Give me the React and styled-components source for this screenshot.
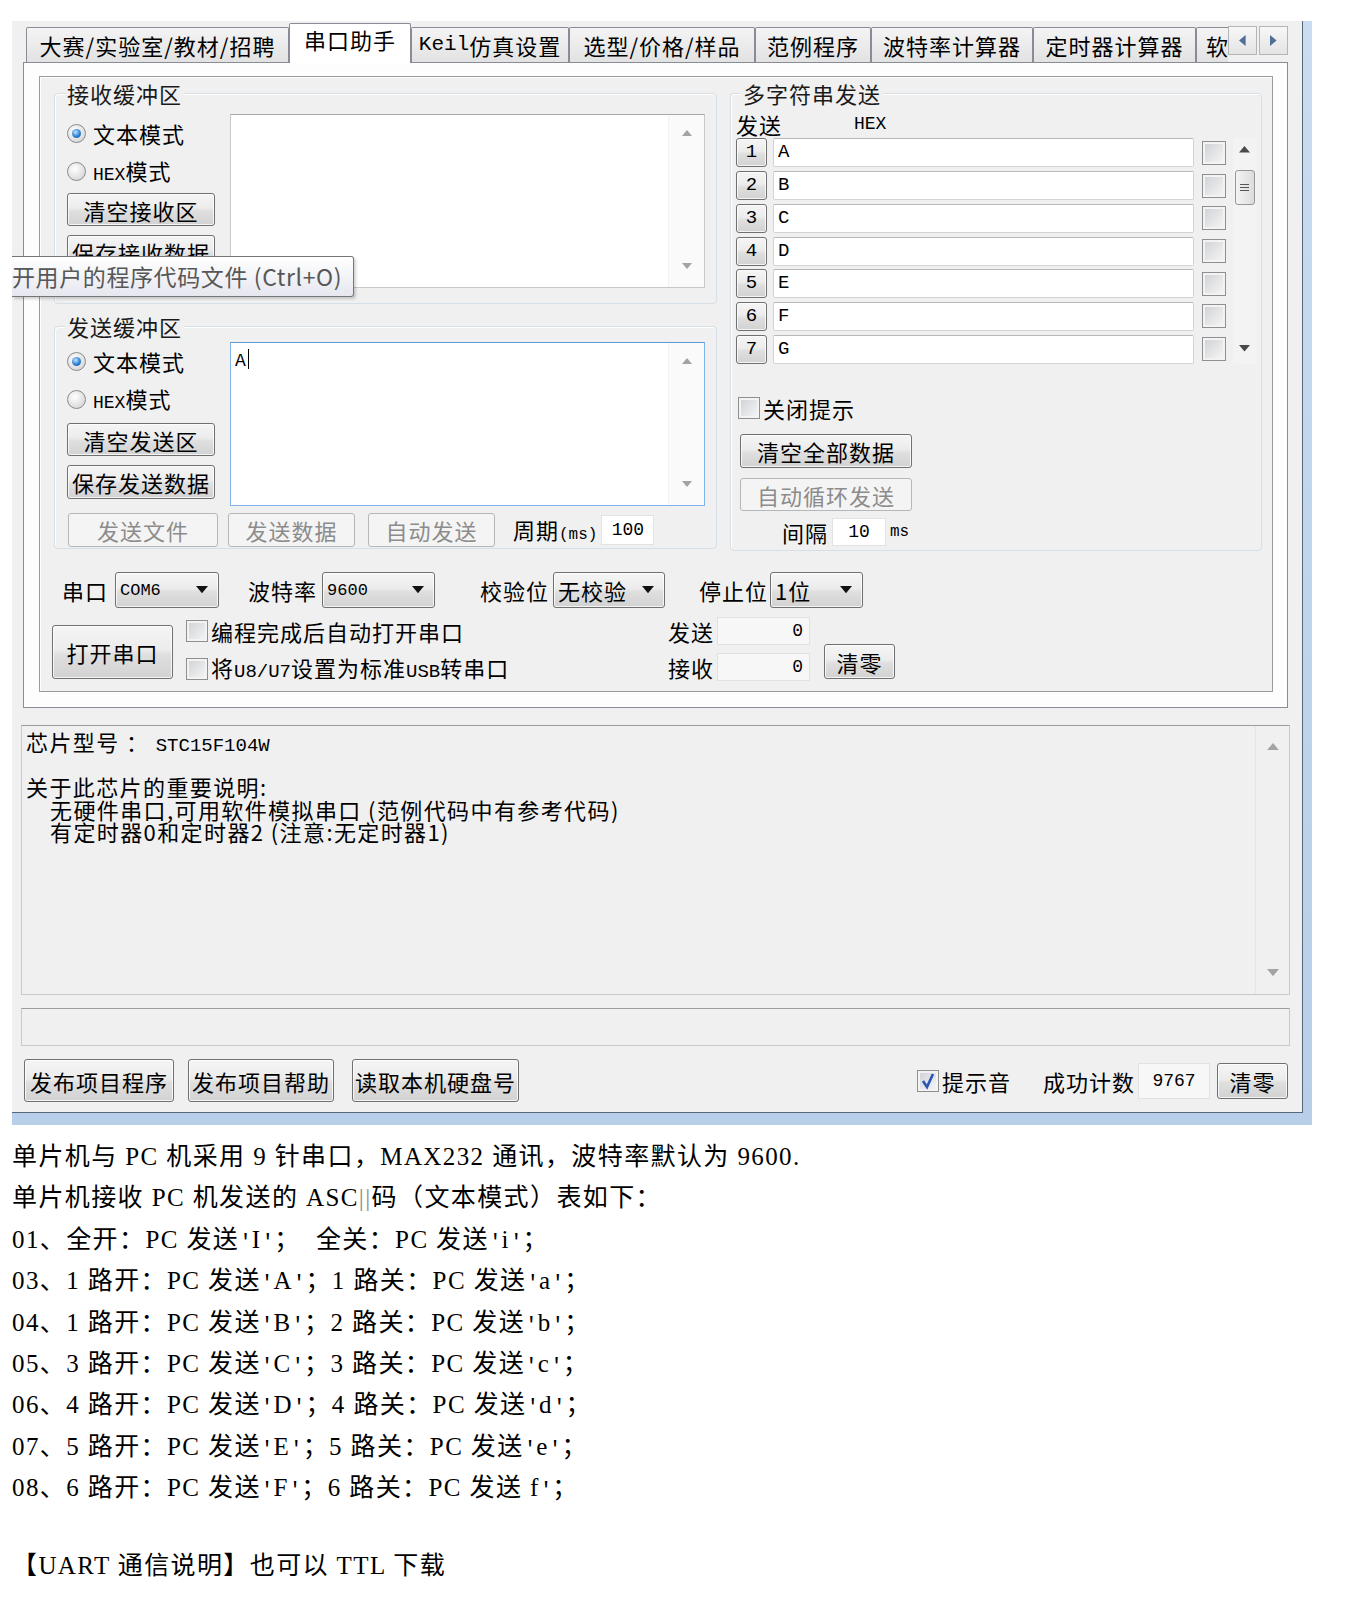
import React from "react";

// npm imports
import styled, { createGlobalStyle, css } from "styled-components";

const UI_FONT = `"Noto Sans CJK SC", "Liberation Sans", sans-serif`;
const MONO_FONT = `"Liberation Mono", "Noto Sans CJK SC", monospace`;
const DOC_FONT = `"Liberation Serif", "Noto Sans CJK SC", serif`;

const GlobalStyle = createGlobalStyle`
  * { box-sizing: border-box; }
  html, body { margin: 0; padding: 0; background: #fff; }
  body { font-family: ${UI_FONT}; color: #000; }
`;

// shared looks
const raised = css`
  border: 1px solid #707070;
  border-radius: 3px;
  background: linear-gradient(#f5f5f5 0%, #ececec 45%, #dfdfdf 55%, #d2d2d2 100%);
  box-shadow: inset 0 0 0 1px rgba(255, 255, 255, 0.75);
`;

const sunken = css`
  border: 1px solid #c9c9c9;
  border-top-color: #9c9c9c;
`;

// styled-components
const Page = styled.div`
  width: 1352px;
  padding: 21px 0 40px 12px;
`;

const WindowFrame = styled.div`
  width: 1300px;
  padding: 0 9px 12px 0;
  background: linear-gradient(180deg, #c9dcf0 0%, #b7cfe9 100%);
`;

const Window = styled.div`
  position: relative;
  display: flex;
  flex-direction: column;
  padding-bottom: 10px;
  background: #f0f0f0;
  border-right: 1px solid #56677a;
  border-bottom: 1px solid #56677a;
  font-size: 22px;
  line-height: 1;
  letter-spacing: 1px;
`;

const TabStrip = styled.div`
  position: relative;
  z-index: 1;
  display: flex;
  align-items: flex-end;
  height: 41px;
  padding: 0 14px;
`;

const Tabs = styled.div`
  flex: 1;
  display: flex;
  align-items: flex-end;
  height: 42px;
  margin-bottom: -1px;
  overflow: hidden;
`;

const Tab = styled.div`
  flex-shrink: 0;
  width: ${(p) => p.$w}px;
  height: ${(p) => (p.$active ? 40 : 35)}px;
  margin-bottom: ${(p) => (p.$active ? 0 : 1)}px;
  padding: ${(p) => (p.$active ? "4px 0 0" : "6px 0 0")};
  padding-left: ${(p) => (p.$lead ? 9 : 0)}px;
  display: flex;
  justify-content: ${(p) => (p.$lead ? "flex-start" : "center")};
  white-space: nowrap;
  overflow: hidden;
  border: 1px solid #898c95;
  border-bottom: none;
  border-radius: 2px 2px 0 0;
  background: ${(p) => (p.$active ? "#fff" : "linear-gradient(#f4f4f4, #e2e2e2)")};
`;

const TabArrows = styled.div`
  align-self: flex-start;
  display: flex;
  gap: 2px;
  margin-top: 5px;
`;

const ArrowButton = styled.div`
  width: 29px;
  height: 29px;
  display: flex;
  align-items: center;
  justify-content: center;
  border: 1px solid #b5b5b5;
  background: linear-gradient(#f7f7f7, #e4e4e4);
`;

const TabPanel = styled.div`
  position: relative;
  height: 646px;
  margin: 0 14px 0 11px;
  padding: 13px 14px 0 15px;
  border: 1px solid #898c95;
  background: #fdfdfd;
`;

const MainFrame = styled.div`
  height: 616px;
  padding: 16px 10px 0 12px;
  border: 1px solid #9a9a9a;
  box-shadow: inset 1px 1px 0 #fff, 1px 1px 0 #fff;
  background: #f0f0f0;
`;

const TopArea = styled.div`
  display: flex;
  gap: 13px;
  margin-left: 2px;
`;

const LeftCol = styled.div`
  width: 663px;
  display: flex;
  flex-direction: column;
  gap: 22px;
`;

const Group = styled.div`
  position: relative;
  width: ${(p) => p.$w || 663}px;
  height: ${(p) => p.$h}px;
  padding: ${(p) => p.$pad};
  border: 1px solid #d5dfe5;
  border-radius: 4px;
  box-shadow: inset 1px 1px 0 #fff;
`;

const Legend = styled.span`
  position: absolute;
  top: -15px;
  left: 10px;
  padding: 0 2px;
  height: 28px;
  line-height: 28px;
  background: #f0f0f0;
  color: #1a1a1a;
`;

const BufferRow = styled.div`
  display: flex;
  gap: 12px;
  height: ${(p) => p.$h}px;
`;

const ModeCol = styled.div`
  width: 152px;
  display: flex;
  flex-direction: column;
`;

const RadioRow = styled.div`
  height: 38px;
  display: flex;
  align-items: center;
  gap: 7px;
  padding-left: 1px;
`;

const Radio = styled.span`
  flex-shrink: 0;
  width: 19px;
  height: 19px;
  border-radius: 50%;
  border: 1px solid #8a8a8a;
  background: radial-gradient(circle at 40% 35%, #ffffff, #dcdcdc 70%, #c6c6c6);
  display: flex;
  align-items: center;
  justify-content: center;
  &::after {
    content: "";
    display: ${(p) => (p.$on ? "block" : "none")};
    width: 9px;
    height: 9px;
    border-radius: 50%;
    background: radial-gradient(circle at 40% 35%, #bfe4ff, #2c80d2 55%, #0c4c8e);
  }
`;

const Lat = styled.span`
  font-family: ${MONO_FONT};
  font-size: ${(p) => p.$s || 18}px;
  letter-spacing: 0;
`;

const Button = styled.div`
  ${raised}
  flex-shrink: 0;
  width: ${(p) => p.$w}px;
  height: ${(p) => p.$h || 34}px;
  margin-top: ${(p) => p.$mt || 0}px;
  margin-left: ${(p) => p.$ml || 0}px;
  display: flex;
  align-items: center;
  justify-content: center;
  white-space: nowrap;
  color: #000;
  ${(p) =>
    p.$off &&
    css`
      border-color: #b3b7ba;
      background: #f4f4f4;
      box-shadow: none;
      color: #8c8c8c;
    `}
`;

const TextBox = styled.div`
  width: 475px;
  display: flex;
  border: 1px solid ${(p) => (p.$focus ? "#7eb4ea" : "#c8c8c8")};
  border-top-color: ${(p) => (p.$focus ? "#5c99d6" : "#a9a9a9")};
  background: #fff;
`;

const TextArea = styled.div`
  flex: 1;
  padding: 6px 4px;
  font-family: ${MONO_FONT};
  font-size: 18px;
  line-height: 22px;
`;

const Caret = styled.span`
  display: inline-block;
  width: 1px;
  height: 20px;
  margin-left: 1px;
  vertical-align: -3px;
  background: #000;
`;

const ScrollGutter = styled.div`
  width: ${(p) => p.$w || 36}px;
  display: flex;
  flex-direction: column;
  align-items: center;
  justify-content: space-between;
  padding: ${(p) => p.$pad || "15px 0 18px"};
  background: ${(p) => p.$bg || "#fafafa"};
  border-left: 1px solid ${(p) => p.$line || "#f2f2f2"};
`;

const TriSvg = styled.svg`
  display: block;
  flex-shrink: 0;
`;

const SendFooter = styled.div`
  display: flex;
  align-items: center;
  height: 34px;
  margin: 7px 0 0 2px;
`;

const FieldLabel = styled.span`
  margin-left: ${(p) => p.$ml || 0}px;
  white-space: nowrap;
`;

const SmallInput = styled.div`
  width: ${(p) => p.$w}px;
  height: ${(p) => p.$h || 30}px;
  margin-left: ${(p) => p.$ml || 0}px;
  display: flex;
  align-items: center;
  justify-content: ${(p) => (p.$right ? "flex-end" : "center")};
  padding: 0 6px;
  border: 1px solid #e2e2e2;
  background: ${(p) => p.$bg || "#fff"};
`;

const MultiHeader = styled.div`
  height: 29px;
  display: flex;
  align-items: center;
`;

const HexLabel = styled(Lat)`
  margin-left: 72px;
`;

const RowsArea = styled.div`
  display: flex;
  height: 226px;
`;

const RowsList = styled.div`
  display: flex;
  flex-direction: column;
  gap: 2.7px;
`;

const StringRow = styled.div`
  height: 30px;
  display: flex;
  align-items: center;
`;

const NumButton = styled.div`
  ${raised}
  width: 31px;
  height: 29px;
  display: flex;
  align-items: center;
  justify-content: center;
  font-family: ${MONO_FONT};
  font-size: 19px;
  letter-spacing: 0;
`;

const RowEdit = styled.div`
  width: 421px;
  height: 29px;
  margin: 0 8px 0 6px;
  padding-left: 4px;
  display: flex;
  align-items: center;
  border: 1px solid #d4d4d4;
  border-top-color: #b8b8b8;
  border-radius: 2px;
  background: #fff;
  font-family: ${MONO_FONT};
  font-size: 19px;
`;

const CheckBox = styled.span`
  flex-shrink: 0;
  width: ${(p) => p.$s || 22}px;
  height: ${(p) => p.$s || 22}px;
  display: flex;
  align-items: center;
  justify-content: center;
  border: 1px solid #8f8f8f;
  background: linear-gradient(135deg, #cdd0d4, #f7f7f7);
  box-shadow: inset 0 0 0 2px #f3f3f3;
`;

const ListScroll = styled.div`
  width: 23px;
  margin-left: 7px;
  display: flex;
  flex-direction: column;
  align-items: center;
  padding: 8px 0 12px;
  background: #f3f3f3;
`;

const Thumb = styled.div`
  width: 20px;
  height: 35px;
  margin-top: 17px;
  display: flex;
  flex-direction: column;
  align-items: center;
  justify-content: center;
  gap: 2px;
  border: 1px solid #979797;
  border-radius: 3px;
  background: linear-gradient(90deg, #f4f4f4, #dcdcdc);
  span {
    width: 9px;
    height: 1px;
    background: #555;
  }
`;

const DownSlot = styled.div`
  margin-top: auto;
`;

const CheckRow = styled.div`
  height: ${(p) => p.$h || 24}px;
  margin: ${(p) => p.$m || 0};
  display: flex;
  align-items: center;
  gap: 3px;
  white-space: nowrap;
`;

const IntervalRow = styled.div`
  height: 28px;
  margin: 7px 0 0 46px;
  display: flex;
  align-items: center;
  gap: 4px;
`;

const SettingsRow = styled.div`
  height: 36px;
  margin-top: 21px;
  display: flex;
  align-items: center;
`;

const Combo = styled.div`
  ${raised}
  width: ${(p) => p.$w}px;
  height: 36px;
  margin-left: ${(p) => p.$gap}px;
  display: flex;
  align-items: center;
  justify-content: space-between;
  padding: 0 10px 0 4px;
  white-space: nowrap;
`;

const OpenRow = styled.div`
  height: 66px;
  margin-top: 9px;
  display: flex;
  align-items: flex-start;
`;

const ChecksCol = styled.div`
  width: 482px;
  margin-left: 13px;
  display: flex;
  flex-direction: column;
  gap: 10px;
`;

const CountersCol = styled.div`
  display: flex;
  flex-direction: column;
  gap: 8px;
`;

const CounterRow = styled.div`
  height: 28px;
  display: flex;
  align-items: center;
`;

const InfoPanel = styled.div`
  ${sunken}
  height: 270px;
  margin: 17px 12px 0 9px;
  display: flex;
  background: #f0f0f0;
`;

const InfoText = styled.div`
  flex: 1;
  padding: 4px 0 0 4px;
  font-size: 22px;
  line-height: 22.5px;
  letter-spacing: 1.4px;
  white-space: pre;
`;

const InfoLine = styled.div`
  height: 22.5px;
  padding-left: ${(p) => (p.$indent ? 24 : 0)}px;
`;

const StatusBar = styled.div`
  ${sunken}
  height: 38px;
  margin: 13px 12px 0 9px;
  background: #f0f0f0;
`;

const BottomBar = styled.div`
  height: 43px;
  margin-top: 13px;
  padding: 0 14px 0 12px;
  display: flex;
  align-items: center;
`;

const BottomRight = styled.div`
  margin-left: auto;
  display: flex;
  align-items: center;
`;

const Tooltip = styled.div`
  position: absolute;
  left: 0;
  top: 235px;
  z-index: 5;
  width: 342px;
  height: 41px;
  display: flex;
  align-items: center;
  border: 1px solid #767676;
  border-left: none;
  border-radius: 0 3px 3px 0;
  background: linear-gradient(#ffffff, #e6e7ef);
  box-shadow: 2px 2px 3px rgba(0, 0, 0, 0.18);
  color: #575757;
  font-size: 23px;
  letter-spacing: 0.6px;
  white-space: nowrap;
`;

const Doc = styled.div`
  margin-top: 11px;
  font-family: ${DOC_FONT};
  font-size: 25px;
  line-height: 41.4px;
  letter-spacing: 1.4px;
  white-space: pre;
`;

const DocLine = styled.div`
  height: 41.4px;
`;

const DocGap = styled.div`
  height: 36.6px;
`;

// the source document draws its apostrophes half-width, like a CJK font does
const Quote = styled.span`
  font-family: ${MONO_FONT};
  font-size: 21px;
  line-height: 0;
  letter-spacing: 0;
`;

const Bars = styled.span`
  color: #8a8a8a;
  font-weight: 300;
`;

// drawings
const Tri = ({ dir, color = "#a3a3a3", size = 10 }) => {
  const paths = {
    up: "M0 6 L10 6 L5 0 Z",
    down: "M0 0 L10 0 L5 6 Z",
    left: "M6 0 L6 10 L0 5 Z",
    right: "M0 0 L0 10 L6 5 Z",
  };
  const flat = dir === "up" || dir === "down";
  return (
    <TriSvg
      width={flat ? size : size * 0.6}
      height={flat ? size * 0.6 : size}
      viewBox={flat ? "0 0 10 6" : "0 0 6 10"}
    >
      <path d={paths[dir]} fill={color} />
    </TriSvg>
  );
};

const Tick = () => (
  <TriSvg width="16" height="18" viewBox="0 0 16 18">
    <path d="M3 9 L7 15 L13 2" fill="none" stroke="#2a56b8" strokeWidth="2.6" />
  </TriSvg>
);

const TABS = [
  { w: 263, label: "大赛/实验室/教材/招聘" },
  { w: 122, label: "串口助手", active: true },
  { w: 158, label: <><Lat $s={21}>Keil</Lat>仿真设置</> },
  { w: 186, label: "选型/价格/样品" },
  { w: 116, label: "范例程序" },
  { w: 162, label: "波特率计算器" },
  { w: 163, label: "定时器计算器" },
  { w: 70, label: "软", lead: true },
];

const STRINGS = ["A", "B", "C", "D", "E", "F", "G"];

const DOC_LINES = [
  "01、全开：PC 发送'I'；  全关：PC 发送'i'；",
  "03、1 路开：PC 发送'A'；1 路关：PC 发送'a'；",
  "04、1 路开：PC 发送'B'；2 路关：PC 发送'b'；",
  "05、3 路开：PC 发送'C'；3 路关：PC 发送'c'；",
  "06、4 路开：PC 发送'D'；4 路关：PC 发送'd'；",
  "07、5 路开：PC 发送'E'；5 路关：PC 发送'e'；",
  "08、6 路开：PC 发送'F'；6 路关：PC 发送 f'；",
];

const withQuotes = (line) =>
  line.split("'").map((part, i) => (
    <React.Fragment key={i}>
      {i > 0 && <Quote>'</Quote>}
      {part}
    </React.Fragment>
  ));

// component
const App = () => {
  return (
    <>
      <GlobalStyle />
      <Page>
        <WindowFrame>
          <Window>
            <TabStrip>
              <Tabs>
                {TABS.map((t, i) => (
                  <Tab key={i} $w={t.w} $active={t.active} $lead={t.lead}>
                    {t.label}
                  </Tab>
                ))}
              </Tabs>
              <TabArrows>
                <ArrowButton>
                  <Tri dir="left" color="#4f6f98" size={11} />
                </ArrowButton>
                <ArrowButton>
                  <Tri dir="right" color="#4f6f98" size={11} />
                </ArrowButton>
              </TabArrows>
            </TabStrip>

            <TabPanel>
              <MainFrame>
                <TopArea>
                  <LeftCol>
                    <Group $h={211} $pad="20px 11px 0 11px">
                      <Legend>接收缓冲区</Legend>
                      <BufferRow $h={174}>
                        <ModeCol>
                          <RadioRow>
                            <Radio $on />
                            文本模式
                          </RadioRow>
                          <RadioRow>
                            <Radio />
                            <span>
                              <Lat $s={18}>HEX</Lat>模式
                            </span>
                          </RadioRow>
                          <Button $w={148} $h={33} $mt={3} $ml={1}>
                            清空接收区
                          </Button>
                          <Button $w={148} $h={33} $mt={9} $ml={1}>
                            保存接收数据
                          </Button>
                        </ModeCol>
                        <TextBox>
                          <TextArea />
                          <ScrollGutter>
                            <Tri dir="up" />
                            <Tri dir="down" />
                          </ScrollGutter>
                        </TextBox>
                      </BufferRow>
                    </Group>

                    <Group $h={223} $pad="15px 11px 0 11px">
                      <Legend>发送缓冲区</Legend>
                      <BufferRow $h={164}>
                        <ModeCol>
                          <RadioRow>
                            <Radio $on />
                            文本模式
                          </RadioRow>
                          <RadioRow>
                            <Radio />
                            <span>
                              <Lat $s={18}>HEX</Lat>模式
                            </span>
                          </RadioRow>
                          <Button $w={148} $h={33} $mt={5} $ml={1}>
                            清空发送区
                          </Button>
                          <Button $w={148} $h={34} $mt={9} $ml={1}>
                            保存发送数据
                          </Button>
                        </ModeCol>
                        <TextBox $focus>
                          <TextArea>
                            A<Caret />
                          </TextArea>
                          <ScrollGutter>
                            <Tri dir="up" />
                            <Tri dir="down" />
                          </ScrollGutter>
                        </TextBox>
                      </BufferRow>
                      <SendFooter>
                        <Button $w={150} $off>
                          发送文件
                        </Button>
                        <Button $w={127} $ml={10} $off>
                          发送数据
                        </Button>
                        <Button $w={127} $ml={13} $off>
                          自动发送
                        </Button>
                        <FieldLabel $ml={18}>
                          周期<Lat $s={16}>(ms)</Lat>
                        </FieldLabel>
                        <SmallInput $w={53} $ml={4}>
                          <Lat>100</Lat>
                        </SmallInput>
                      </SendFooter>
                    </Group>
                  </LeftCol>

                  <Group $w={532} $h={458} $pad="15px 5px 0 5px">
                    <Legend>多字符串发送</Legend>
                    <MultiHeader>
                      发送
                      <HexLabel>HEX</HexLabel>
                    </MultiHeader>
                    <RowsArea>
                      <RowsList>
                        {STRINGS.map((s, i) => (
                          <StringRow key={s}>
                            <NumButton>{i + 1}</NumButton>
                            <RowEdit>{s}</RowEdit>
                            <CheckBox $s={24} />
                          </StringRow>
                        ))}
                      </RowsList>
                      <ListScroll>
                        <Tri dir="up" color="#4a4a4a" size={11} />
                        <Thumb>
                          <span />
                          <span />
                          <span />
                        </Thumb>
                        <DownSlot>
                          <Tri dir="down" color="#4a4a4a" size={11} />
                        </DownSlot>
                      </ListScroll>
                    </RowsArea>
                    <CheckRow $m="32px 0 0 2px">
                      <CheckBox />
                      关闭提示
                    </CheckRow>
                    <Button $w={172} $h={34} $mt={14} $ml={4}>
                      清空全部数据
                    </Button>
                    <Button $w={172} $h={33} $mt={10} $ml={4} $off>
                      自动循环发送
                    </Button>
                    <IntervalRow>
                      间隔
                      <SmallInput $w={54} $h={28}>
                        <Lat>10</Lat>
                      </SmallInput>
                      <Lat $s={16}>ms</Lat>
                    </IntervalRow>
                  </Group>
                </TopArea>

                <SettingsRow>
                  <FieldLabel $ml={10}>串口</FieldLabel>
                  <Combo $w={104} $gap={7}>
                    <Lat $s={17}>COM6</Lat>
                    <Tri dir="down" color="#111" size={12} />
                  </Combo>
                  <FieldLabel $ml={29}>波特率</FieldLabel>
                  <Combo $w={113} $gap={5}>
                    <Lat $s={17}>9600</Lat>
                    <Tri dir="down" color="#111" size={12} />
                  </Combo>
                  <FieldLabel $ml={45}>校验位</FieldLabel>
                  <Combo $w={112} $gap={4}>
                    无校验
                    <Tri dir="down" color="#111" size={12} />
                  </Combo>
                  <FieldLabel $ml={34}>停止位</FieldLabel>
                  <Combo $w={93} $gap={2}>
                    1位
                    <Tri dir="down" color="#111" size={12} />
                  </Combo>
                </SettingsRow>

                <OpenRow>
                  <Button $w={121} $h={54} $mt={8}>
                    打开串口
                  </Button>
                  <ChecksCol>
                    <CheckRow $h={28}>
                      <CheckBox />
                      编程完成后自动打开串口
                    </CheckRow>
                    <CheckRow $h={28}>
                      <CheckBox />
                      <span>
                        将<Lat $s={19}>U8/U7</Lat>设置为标准<Lat $s={19}>USB</Lat>转串口
                      </span>
                    </CheckRow>
                  </ChecksCol>
                  <CountersCol>
                    <CounterRow>
                      发送
                      <SmallInput $w={93} $h={28} $ml={3} $right $bg="#f7f7f7">
                        <Lat>0</Lat>
                      </SmallInput>
                    </CounterRow>
                    <CounterRow>
                      接收
                      <SmallInput $w={93} $h={28} $ml={3} $right $bg="#f7f7f7">
                        <Lat>0</Lat>
                      </SmallInput>
                    </CounterRow>
                  </CountersCol>
                  <Button $w={71} $h={35} $mt={27} $ml={14}>
                    清零
                  </Button>
                </OpenRow>
              </MainFrame>
            </TabPanel>

            <InfoPanel>
              <InfoText>
                <InfoLine>
                  芯片型号 ： <Lat $s={19}>STC15F104W</Lat>
                </InfoLine>
                <InfoLine />
                <InfoLine>关于此芯片的重要说明:</InfoLine>
                <InfoLine $indent>无硬件串口,可用软件模拟串口 (范例代码中有参考代码)</InfoLine>
                <InfoLine $indent>有定时器0和定时器2 (注意:无定时器1)</InfoLine>
              </InfoText>
              <ScrollGutter $w={34} $pad="17px 0 18px" $bg="#f0f0f0" $line="#e4e4e4">
                <Tri dir="up" size={12} />
                <Tri dir="down" size={12} />
              </ScrollGutter>
            </InfoPanel>

            <StatusBar />

            <BottomBar>
              <Button $w={150} $h={43}>
                发布项目程序
              </Button>
              <Button $w={146} $h={43} $ml={14}>
                发布项目帮助
              </Button>
              <Button $w={167} $h={43} $ml={18}>
                读取本机硬盘号
              </Button>
              <BottomRight>
                <CheckBox>
                  <Tick />
                </CheckBox>
                <FieldLabel $ml={3}>提示音</FieldLabel>
                <FieldLabel $ml={32}>成功计数</FieldLabel>
                <SmallInput $w={72} $h={36} $ml={3} $bg="#f7f7f7">
                  <Lat>9767</Lat>
                </SmallInput>
                <Button $w={71} $h={36} $ml={7}>
                  清零
                </Button>
              </BottomRight>
            </BottomBar>

            <Tooltip>开用户的程序代码文件 (Ctrl+O)</Tooltip>
          </Window>
        </WindowFrame>

        <Doc>
          <DocLine>单片机与 PC 机采用 9 针串口，MAX232 通讯，波特率默认为 9600.</DocLine>
          <DocLine>
            单片机接收 PC 机发送的 ASC<Bars>||</Bars>码（文本模式）表如下：
          </DocLine>
          {DOC_LINES.map((line) => (
            <DocLine key={line}>{withQuotes(line)}</DocLine>
          ))}
          <DocGap />
          <DocLine>【UART 通信说明】也可以 TTL 下载</DocLine>
        </Doc>
      </Page>
    </>
  );
};

export default App;
